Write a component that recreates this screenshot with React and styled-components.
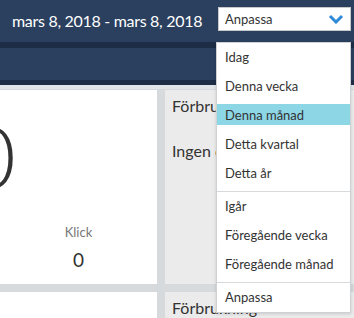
import React from 'react';
import styled, { createGlobalStyle } from 'styled-components';

const Global = createGlobalStyle`
  html, body {
    margin: 0;
    padding: 0;
    background: #d6dadd;
    overflow: hidden;
    font-family: Lato, "Open Sans", sans-serif;
  }
`;

const menuGroups = [
  ['Idag', 'Denna vecka', 'Denna månad', 'Detta kvartal', 'Detta år'],
  ['Igår', 'Föregående vecka', 'Föregående månad'],
  ['Anpassa'],
];

const Chevron = () => (
  <svg width="16" height="10" viewBox="0 0 16 10">
    <path d="M2 2 L8 8 L14 2" fill="none" stroke="#2e8ad8" strokeWidth="3" />
  </svg>
);

export default function App() {
  return (
    <Page>
      <Global />
      <Header>
        <DateRange>mars 8, 2018 - mars 8, 2018</DateRange>
        <Select>
          <span>Anpassa</span>
          <Chevron />
        </Select>
      </Header>
      <SubNav />
      <Board>
        <Row>
          <WhiteCard>
            <BigValue>0</BigValue>
            <Stats>
              <Stat selected />
              <Stat>
                <StatLabel>Klick</StatLabel>
                <StatValue>0</StatValue>
              </Stat>
            </Stats>
          </WhiteCard>
          <GreyCard>
            <CardTitle>Förbrukning</CardTitle>
            <Empty>Ingen data</Empty>
          </GreyCard>
        </Row>
        <Row>
          <WhiteCard />
          <GreyCard>
            <CardTitle>Förbrukning</CardTitle>
          </GreyCard>
        </Row>
      </Board>
      <Menu>
        {menuGroups.map((group, i) => (
          <MenuGroup key={i}>
            {group.map((label) => (
              <MenuItem key={label} active={label === 'Denna månad'}>
                {label}
              </MenuItem>
            ))}
          </MenuGroup>
        ))}
      </Menu>
    </Page>
  );
}

const Page = styled.div`
  position: relative;
  width: 354px;
  height: 318px;
  overflow: hidden;
`;

const Header = styled.div`
  height: 42px;
  background: #2a405e;
  display: flex;
  align-items: center;
  padding: 0 3px 0 12px;
  box-sizing: border-box;
  justify-content: space-between;
`;

const DateRange = styled.div`
  color: #fff;
  font-size: 16px;
  letter-spacing: -0.3px;
  white-space: nowrap;
  margin-top: -2px;
`;

const Select = styled.div`
  width: 133px;
  height: 24px;
  margin-top: -4px;
  box-sizing: border-box;
  background: #fff;
  border: 1px solid #c8c8c8;
  display: flex;
  align-items: center;
  justify-content: space-between;
  padding: 0 6px 0 6px;
  font-size: 13px;
  color: #333;
`;

const SubNav = styled.div`
  height: 32px;
  background: #2a405e;
  border-top: 6px solid #1d2d45;
  border-bottom: 5px solid #1d2d45;
  box-shadow: 0 4px 0 #e2e5e7;
`;

const Board = styled.div`
  margin-left: -157px;
  padding-top: 5px;
  display: flex;
  flex-direction: column;
  gap: 8px;
`;

const Row = styled.div`
  display: grid;
  grid-template-columns: 314px 320px;
  gap: 8px;
`;

const WhiteCard = styled.div`
  background: #fff;
  height: 194px;
  display: flex;
  flex-direction: column;
`;

const BigValue = styled.div`
  width: 173px;
  text-align: right;
  font-size: 86px;
  font-weight: 300;
  color: #333;
  line-height: 1;
  padding-top: 23px;
  box-sizing: border-box;
  height: 128px;
  overflow: hidden;
`;

const Stats = styled.div`
  display: grid;
  grid-template-columns: 157px 157px;
`;

const Stat = styled.div`
  height: 53px;
  box-sizing: border-box;
  border-right: ${(p) => (p.selected ? '1px solid #c5dcef' : 'none')};
  display: flex;
  flex-direction: column;
  align-items: center;
  padding-top: 6px;
`;

const StatLabel = styled.div`
  font-size: 13px;
  color: #777;
`;

const StatValue = styled.div`
  font-size: 19px;
  color: #333;
  margin-top: 8px;
`;

const GreyCard = styled.div`
  background: #ebebeb;
  height: 194px;
  padding: 6px 7px;
  box-sizing: border-box;
`;

const CardTitle = styled.div`
  font-size: 16px;
  color: #333;
`;

const Empty = styled.div`
  font-size: 16px;
  color: #333;
  margin-top: 26px;
`;

const Menu = styled.div`
  position: absolute;
  left: 216px;
  top: 42px;
  width: 135px;
  box-sizing: border-box;
  background: #fff;
  border: 1px solid #cfd2d4;
  box-shadow: 0 1px 3px rgba(0, 0, 0, 0.15);
`;

const MenuGroup = styled.div`
  display: flex;
  flex-direction: column;
  padding: 0 0 3px;
  & + & {
    border-top: 1px solid #d7d9db;
  }
  &:last-child {
    padding-bottom: 0;
  }
`;

const MenuItem = styled.div`
  height: 21px;
  margin: 3px 0 5px;
  padding: 0 8px;
  line-height: 23px;
  font-size: 13px;
  color: #333;
  background: ${(p) => (p.active ? '#8dd6e6' : 'transparent')};
  white-space: nowrap;
`;
